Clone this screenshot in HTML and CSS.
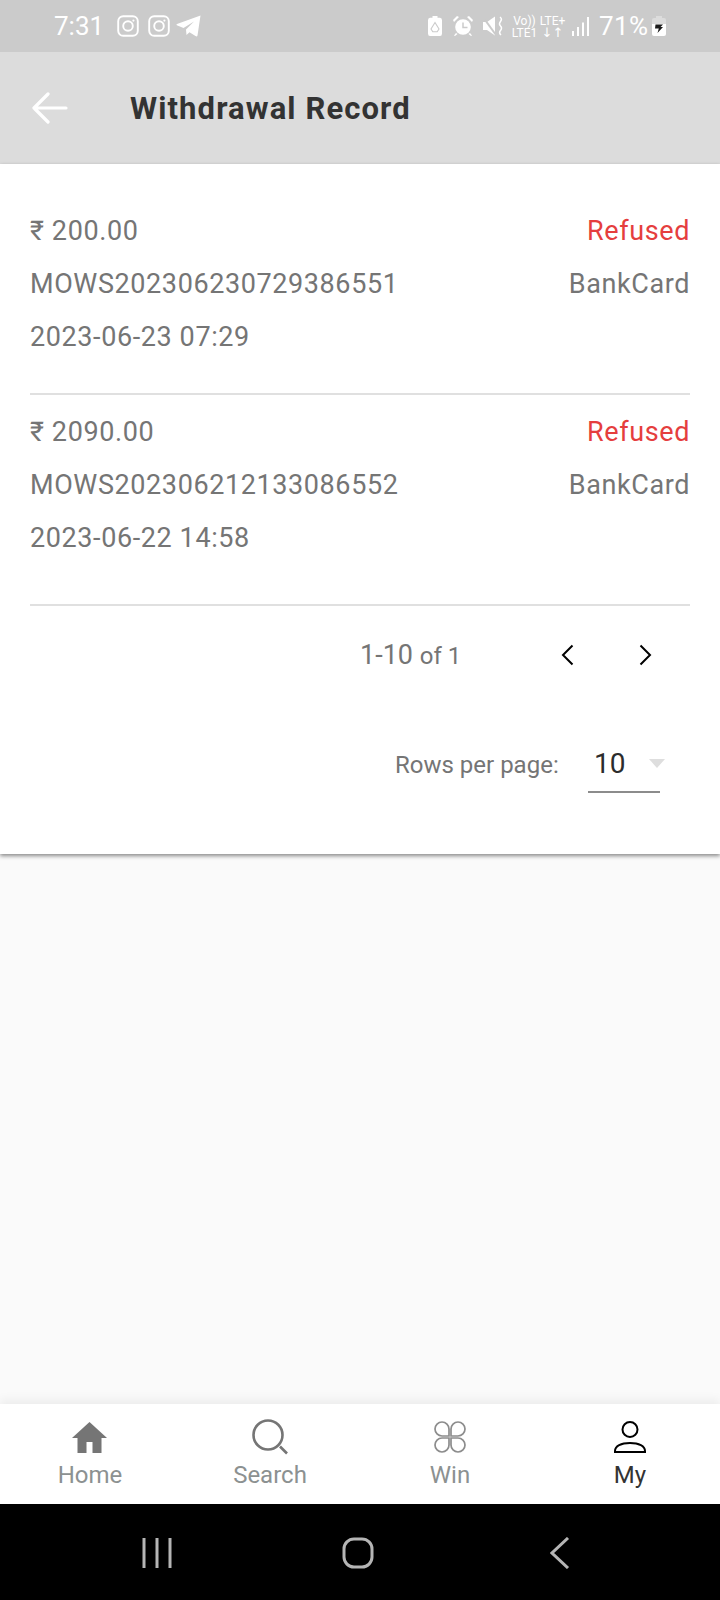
FILE: index.html
```html
<!DOCTYPE html>
<html lang="en">
<head>
    <meta charset="UTF-8">
    <title>Withdrawal Record</title>
    <link rel="stylesheet" href="styles.css">
</head>
<body>
    <div class="status-bar">
        <div class="status-left">
            <span class="clock">7:31</span>
            <svg class="insta" viewBox="0 0 22 22"><rect x="1.2" y="1.2" width="19.6" height="19.6" rx="5" /><circle cx="11" cy="11" r="4.8" /><circle class="dot" cx="16.4" cy="5.6" r="1.1" /></svg>
            <svg class="insta" viewBox="0 0 22 22"><rect x="1.2" y="1.2" width="19.6" height="19.6" rx="5" /><circle cx="11" cy="11" r="4.8" /><circle class="dot" cx="16.4" cy="5.6" r="1.1" /></svg>
            <svg class="telegram" viewBox="0 0 25 22"><path d="M24.5 0.5 L21.5 20.5 Q21 22 19.5 21 L13.5 17.2 L10.5 20 L10 14.5 L18 6.5 L7.5 13 L0.8 10.2 Q0 9.6 1 9 Z" /></svg>
        </div>
        <div class="status-right">
            <svg class="ic-recycle" viewBox="0 0 14 20"><path d="M4.500 0h5v1.800h2.500q2 0 2 2.500v13.200q0 2.500-2 2.500H2q-2 0-2-2.500V4.300q0-2.500 2-2.500h2.500z" /><path class="cut" d="M7 6.500l-4 6.500 1.800 2.800h4.400l1.800-2.800z" /></svg>
            <svg class="ic-alarm" viewBox="0 0 20 20"><circle cx="10" cy="11" r="7.800" /><path d="M0 4l4-4 2 1-5 5zM20 4l-4-4-2 1 5 5zM3 17l-2 2.500 1 .5 2.500-2zM17 17l2 2.500-1 .5-2.500-2z" /><path class="cut" d="M10 6.500v5h4.500" /></svg>
            <svg class="ic-mute" viewBox="0 0 20 20"><path d="M0 6h4l8-5.500v19L4 14H0z" /><path class="slash" d="M0 1l13 18" /><path class="wave" d="M17 1q2.500 2 .5 4.500t0 4.500t0 4.500t.5 4.500" /></svg>
            <div class="net-text net-vo"><span>Vo))</span><span>LTE1</span></div>
            <div class="net-text net-lte"><span>LTE+</span><span class="arrows">↓↑</span></div>
            <svg class="ic-signal" viewBox="0 0 17 19"><rect x="0" y="14" width="2" height="5" /><rect x="5" y="10" width="2" height="9" /><rect x="10" y="5.500" width="2" height="13.500" /><rect x="15" y="0" width="2" height="19" /></svg>
            <span class="battery-pct">71%</span>
            <svg class="ic-battery" viewBox="0 0 14 20"><path class="top" d="M4 0h6v2h2q2 0 2 2v5H0V4q0-2 2-2h2z" /><path d="M0 8h14v10q0 2-2 2H2q-2 0-2-2z" /><path class="bolt" d="M3.500 8.500h7.500l-2.500 2.500h2.500l-5.500 6 1.300-4.500H3z" /></svg>
        </div>
    </div>

    <header class="app-bar">
        <svg class="back" viewBox="0 0 36 32"><path d="M34 16H2M16 2L2 16l14 14" /></svg>
        <h1>Withdrawal Record</h1>
    </header>

    <section class="card">
        <div class="record">
            <div class="line"><span>₹ 200.00</span><span class="refused">Refused</span></div>
            <div class="line"><span>MOWS202306230729386551</span><span>BankCard</span></div>
            <div class="line"><span>2023-06-23 07:29</span></div>
        </div>
        <div class="record record-next">
            <div class="line"><span>₹ 2090.00</span><span class="refused">Refused</span></div>
            <div class="line"><span>MOWS202306212133086552</span><span>BankCard</span></div>
            <div class="line"><span>2023-06-22 14:58</span></div>
        </div>

        <div class="pager">
            <span class="range">1-10 <small>of 1</small></span>
            <svg class="chev" viewBox="0 0 14 22"><path d="M12.500 1.500L3 11l9.500 9.500" /></svg>
            <svg class="chev" viewBox="0 0 14 22"><path d="M1.500 1.500L11 11l-9.500 9.500" /></svg>
        </div>

        <div class="rows-per-page">
            <span class="rows-label">Rows per page:</span>
            <div class="rows-select"><span>10</span><i class="caret"></i></div>
        </div>
    </section>

    <main class="empty"></main>

    <nav class="tabs">
        <div class="tab">
            <svg viewBox="0 0 36 36"><path class="solid" d="M17.500 3L0 19h5.500v15h9V23h6v11h9V19H35z" /></svg>
            <span>Home</span>
        </div>
        <div class="tab">
            <svg viewBox="0 0 36 36"><circle class="outline" cx="16" cy="16" r="14.500" /><path class="outline" d="M28 27.500l7 7" /></svg>
            <span>Search</span>
        </div>
        <div class="tab">
            <svg viewBox="0 0 36 36"><path class="thin" d="M17 17H10a7 7 0 1 1 7-7zM19 17h7a7 7 0 1 0-7-7zM17 19H10a7 7 0 1 0 7 7zM19 19h7a7 7 0 1 1-7 7z" /></svg>
            <span>Win</span>
        </div>
        <div class="tab active">
            <svg viewBox="0 0 36 36"><circle class="outline" cx="18" cy="10.500" r="7.500" /><path class="outline" d="M3 33v-1c0-5 6-8 15-8s15 3 15 8v1z" /></svg>
            <span>My</span>
        </div>
    </nav>

    <div class="sys-nav">
        <svg class="sys-recent" viewBox="0 0 30 30"><path d="M2 0v30M15 0v30M28 0v30" /></svg>
        <svg class="sys-home" viewBox="0 0 32 32"><rect x="2" y="2" width="28" height="28" rx="10" /></svg>
        <svg class="sys-back" viewBox="0 0 20 32"><path d="M18 1L2 16l16 15" /></svg>
    </div>
</body>
</html>
```

FILE: styles.css
```css
* {
    box-sizing: border-box;
}

body {
    margin: 0;
    width: 720px;
    height: 1600px;
    display: flex;
    flex-direction: column;
    font-family: Roboto, 'Noto Sans', sans-serif;
    background-color: #fafafa;
    color: #757575;
}

/* status bar */
.status-bar {
    height: 52px;
    flex: none;
    display: flex;
    justify-content: space-between;
    align-items: center;
    padding: 0 54px 0 54px;
    background-color: #cbcbcb;
    color: #fff;
}

.status-left, .status-right {
    display: flex;
    align-items: center;
}

.status-left {
    gap: 9px;
}

.clock {
    font-size: 26px;
    margin-right: 4px;
}

.insta {
    width: 22px;
    height: 22px;
    fill: none;
    stroke: #fff;
    stroke-width: 1.9;
}

.insta .dot {
    fill: #fff;
    stroke: none;
}

.telegram {
    width: 25px;
    height: 22px;
    margin-left: -3px;
    fill: #fff;
}

.ic-recycle {
    width: 14px;
    height: 20px;
    fill: #fff;
}

.ic-recycle .cut {
    fill: none;
    stroke: #cbcbcb;
    stroke-width: 1.1;
}

.ic-alarm {
    width: 20px;
    height: 20px;
    margin-left: 11px;
    fill: #fff;
}

.ic-alarm .cut {
    fill: none;
    stroke: #cbcbcb;
    stroke-width: 1.5;
}

.ic-mute {
    width: 20px;
    height: 20px;
    margin-left: 10px;
    fill: #fff;
}

.ic-mute .slash {
    stroke: #cbcbcb;
    stroke-width: 2;
}

.ic-mute .wave {
    fill: none;
    stroke: #fff;
    stroke-width: 1.5;
}

.net-text {
    width: 25px;
    display: flex;
    flex-direction: column;
    align-items: center;
    font-size: 12px;
    line-height: 12px;
    margin-top: 2px;
    white-space: nowrap;
}

.net-vo {
    margin-left: 9px;
}

.net-lte {
    margin-left: 3px;
}

.arrows {
    font-family: 'DejaVu Sans', sans-serif;
    font-size: 13px;
}

.ic-signal {
    width: 17px;
    height: 19px;
    margin-left: 7px;
    fill: #fff;
}

.battery-pct {
    width: 47px;
    margin-left: 10px;
    font-size: 26px;
    letter-spacing: 0.4px;
    white-space: nowrap;
}

.ic-battery {
    width: 14px;
    height: 20px;
    margin-left: 6px;
    fill: #fff;
}

.ic-battery .top {
    fill: #dcdcdc;
}

.ic-battery .bolt {
    fill: #1c1c1c;
}

/* app bar */
.app-bar {
    height: 112px;
    flex: none;
    display: flex;
    align-items: center;
    padding: 0 32px;
    background-color: #dcdcdc;
}

.back {
    width: 36px;
    height: 32px;
    margin-bottom: 1px;
    fill: none;
    stroke: #fff;
    stroke-width: 3.2;
    stroke-linecap: round;
    stroke-linejoin: round;
}

.app-bar h1 {
    margin: 0 0 0 62px;
    font-size: 31px;
    font-weight: 700;
    letter-spacing: 1.1px;
    color: #333;
}

/* card */
.card {
    height: 690px;
    flex: none;
    padding: 40px 30px 0;
    background-color: #fff;
    box-shadow: 0 2px 4px rgba(0, 0, 0, 0.45);
    position: relative;
}

.record {
    height: 191px;
    border-bottom: 2px solid #e0e0e0;
    font-size: 27px;
    letter-spacing: 0.6px;
}

.record-next {
    height: 211px;
    padding-top: 10px;
}

.line {
    height: 53px;
    display: flex;
    justify-content: space-between;
    align-items: center;
}

.refused {
    color: #e53e3e;
}

.pager {
    height: 98px;
    display: flex;
    align-items: center;
    padding-left: 330px;
}

.range {
    flex: none;
    width: 200px;
    font-size: 27px;
}

.range small {
    font-size: 24px;
}

.chev {
    flex: none;
    width: 14px;
    height: 22px;
    fill: none;
    stroke: #000;
    stroke-width: 2;
}

.chev + .chev {
    margin-left: 65px;
}

.rows-per-page {
    display: flex;
    align-items: center;
    padding-left: 365px;
    margin-top: 32px;
}

.rows-label {
    font-size: 24px;
    width: 193px;
}

.rows-select {
    width: 72px;
    height: 57px;
    display: flex;
    align-items: center;
    justify-content: space-between;
    padding-left: 6px;
    border-bottom: 2px solid #8c8c8c;
    font-size: 28px;
    color: #2c2c2c;
}

.caret {
    width: 0;
    height: 0;
    margin-right: -5px;
    border-left: 8px solid transparent;
    border-right: 8px solid transparent;
    border-top: 9px solid #dedede;
}

.empty {
    flex: 1;
}

/* bottom tabs */
.tabs {
    height: 100px;
    flex: none;
    display: grid;
    grid-template-columns: repeat(4, 180px);
    background-color: #fff;
    box-shadow: 0 -4px 10px rgba(0, 0, 0, 0.06);
    position: relative;
}

.tab {
    display: flex;
    flex-direction: column;
    align-items: center;
    padding-top: 15px;
    font-size: 24px;
    color: #8c9191;
}

.tab svg {
    width: 36px;
    height: 36px;
    margin-bottom: 6px;
}

.tab .solid {
    fill: #757575;
}

.tab .outline {
    fill: none;
    stroke: #757575;
    stroke-width: 2.6;
}

.tab .thin {
    fill: none;
    stroke: #8c8c8c;
    stroke-width: 1.7;
}

.tab.active {
    color: #333;
}

.tab.active .outline {
    stroke: #000;
    stroke-width: 2;
}

.sys-nav {
    height: 96px;
    flex: none;
    position: relative;
    background-color: #000;
}

.sys-nav svg {
    position: absolute;
    fill: none;
    stroke: #b5b5b5;
    stroke-width: 3;
}

.sys-recent {
    left: 142px;
    top: 34px;
    width: 30px;
    height: 30px;
}

.sys-home {
    left: 342px;
    top: 33px;
    width: 32px;
    height: 32px;
}

.sys-back {
    left: 550px;
    top: 33px;
    width: 20px;
    height: 32px;
}
```
